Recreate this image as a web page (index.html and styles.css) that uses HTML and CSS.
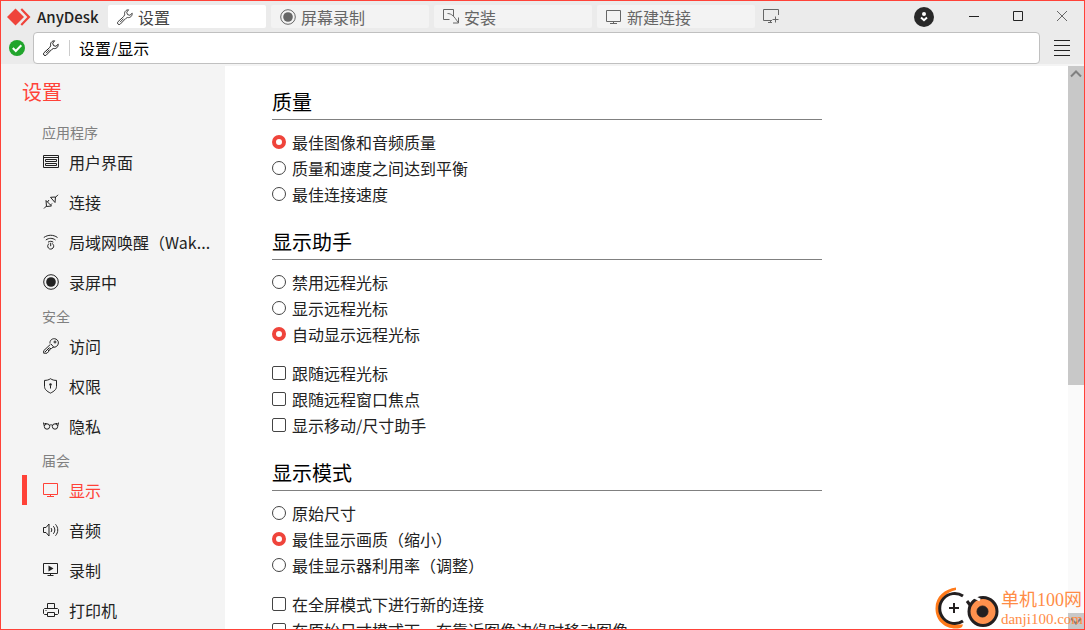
FILE: index.html
```html
<!DOCTYPE html>
<html lang="zh-CN">
<head>
  <meta charset="UTF-8">
  <meta name="viewport" content="width=device-width, initial-scale=1">
  <title>AnyDesk</title>
  <link rel="stylesheet" href="styles.css">
</head>
<body>

  <!-- Shared icons -->
  <svg class="sprite" aria-hidden="true">
    <symbol id="wrench" viewBox="0 0 16 16">
      <path d="M11.6.8C8.8.7 7 3 7.7 5.8L6.600 7.600 1 12.700a1.600 1.600 0 0 0 2.300 2.400L8.600 9.600l1.700-1.100C13 9.200 15.400 7.200 15.200 4.200L12.900 6.300 10.500 5.600 9.700 3.200z"/>
      <path d="M3 13.200l3.500-3.500"/>
    </symbol>
    <symbol id="monitor" viewBox="0 0 16 16">
      <path d="M.5 1.500h14v11H.5zM7.500 12.500v2M4 14.500h7"/>
    </symbol>
    <symbol id="record" viewBox="0 0 16 16">
      <circle cx="8" cy="8" r="7.300"/>
      <circle class="solid" cx="8" cy="8" r="4.800"/>
    </symbol>
  </svg>

  <div class="app">
    <header class="titlebar">
      <div class="brand">
        <svg class="logo" viewBox="0 0 24 18" aria-hidden="true">
          <path d="M8.500.5l8.500 8.500-8.500 8.500L0 9z"/>
          <path d="M13.500 1.700L15 .3 23.500 9 15 17.700l-1.500-1.400L20.300 9z"/>
        </svg>
        <span>AnyDesk</span>
      </div>
      <nav class="tabs">
        <button class="tab active" type="button"><svg class="icon"><use href="#wrench"/></svg>设置</button>
        <button class="tab" type="button"><svg class="icon"><use href="#record"/></svg>屏幕录制</button>
        <button class="tab" type="button">
          <svg class="icon" viewBox="0 0 16 16"><path d="M10.500 4V.5H.5v10h6M10.500 4v3M4.500 4.500c4 0 7 3 10.500 9M15.500 8.500v5.500H10"/></svg>安装
        </button>
        <button class="tab" type="button"><svg class="icon"><use href="#monitor"/></svg>新建连接</button>
      </nav>
      <button class="new-tab" type="button" aria-label="新标签">
        <svg class="icon" viewBox="0 0 16 16"><path d="M15.500 6V.5H.5v11H9M7.500 11.500v2M5 13.500h4M12.500 7.500v6M9.500 10.500h6"/></svg>
      </button>
      <div class="window-controls">
        <button class="update" type="button" aria-label="更新">
          <svg viewBox="0 0 20 20"><circle class="disc" cx="10" cy="10" r="10"/><circle class="dot" cx="10" cy="7" r="2"/><path d="M7 10.500l3 2.700 3-2.700"/></svg>
        </button>
        <button class="control" type="button" aria-label="最小化"><svg class="icon" viewBox="0 0 16 16"><path d="M3 7.500h10"/></svg></button>
        <button class="control" type="button" aria-label="最大化"><svg class="icon" viewBox="0 0 16 16"><path d="M3.500 2.500h9v9h-9z"/></svg></button>
        <button class="control close" type="button" aria-label="关闭"><svg class="icon" viewBox="0 0 16 16"><path d="M3 2l10 10M13 2L3 12"/></svg></button>
      </div>
    </header>

    <div class="addressbar">
      <svg class="status" viewBox="0 0 16 16" aria-hidden="true"><circle cx="8" cy="8" r="8"/><path d="M3.800 8l3 3 5.500-5.700"/></svg>
      <label class="address">
        <svg class="icon" aria-hidden="true"><use href="#wrench"/></svg>
        <input type="text" value="设置/显示" aria-label="地址">
      </label>
      <button class="menu" type="button" aria-label="菜单">
        <svg class="icon" viewBox="0 0 16 16"><path d="M0 .5h16M0 5.500h16M0 10.500h16M0 15.500h16"/></svg>
      </button>
    </div>

    <div class="content">
      <nav class="sidebar">
        <h1>设置</h1>

        <h2>应用程序</h2>
        <a class="item" href="#ui">
          <svg class="icon" viewBox="0 0 16 16"><path d="M.5 1.500h15v12H.5zM.5 3.500h15M2.500 5.500h11v2h-11zM2.500 9.500h11v2h-11z"/></svg>用户界面</a>
        <a class="item" href="#connection">
          <svg class="icon" viewBox="0 0 16 16"><path d="M1 14.500l2.500-2.500M3 6.500l5.500 5.500-5 .5zM4.500 8l1.500-2M7.500 11l1.500-1.500M15 .8L12.500 3.300M7.500 3.300l5-.3-.5 5.500z"/></svg>连接</a>
        <a class="item" href="#wol">
          <svg class="icon" viewBox="0 0 16 16"><path d="M.8 3.500c4.300-3 9.400-3 13.700 0M2.800 6c3.200-2.200 6.600-2.200 9.700 0M5 8.200c1.800-1.200 3.600-1.200 5.300 0M6.200 9.500a3 3 0 1 0 3 0M7.700 8.800v3.400"/></svg>局域网唤醒（Wak...</a>
        <a class="item" href="#recording"><svg class="icon"><use href="#record"/></svg>录屏中</a>

        <h2>安全</h2>
        <a class="item" href="#access">
          <svg class="icon" viewBox="0 0 16 16"><path d="M7 5.500C6.500 2.500 9 .5 11.500.7c2.200.2 4 2 3.900 4.200-.2 2.800-2.500 4.800-5.400 4.300L8.500 10.500H7v1.600H5.500v1.600l-1.500 1.500H.7v-2.500L7.300 6.500M8 6l2.500 2.800M2 14l4.500-4.500"/><circle cx="12" cy="4" r="1"/></svg>访问</a>
        <a class="item" href="#permissions">
          <svg class="icon" viewBox="0 0 16 16"><path d="M7.500.7C5.800 2 3.500 2.400 1.500 2.400v6c0 3 2.500 5 6 6.700 3.500-1.700 6-3.700 6-6.700v-6c-2 0-4.300-.4-6-1.700zM7.500 7.500v3"/><circle class="solid" cx="7.500" cy="6.500" r="1.200"/></svg>权限</a>
        <a class="item" href="#privacy">
          <svg class="icon" viewBox="0 0 16 16"><circle cx="4" cy="8.500" r="2.700"/><circle cx="12" cy="8.500" r="2.700"/><path d="M6.500 7.300c1-.6 2-.6 3 0M1.300 8L.4 4.500M14.700 8l.9-3.500M1.500 5.500h2M12.500 5.500h2"/></svg>隐私</a>

        <h2>届会</h2>
        <a class="item current" href="#display"><svg class="icon"><use href="#monitor"/></svg>显示</a>
        <a class="item" href="#audio">
          <svg class="icon" viewBox="0 0 16 16"><path d="M.5 5.500h2.500l3-3.500v12l-3-3.500H.5zM8 6c1 1.200 1 2.800 0 4M10.300 4.200c2 2.300 2 5.300 0 7.600M12.500 2.300c3 3.400 3 8 0 11.400"/></svg>音频</a>
        <a class="item" href="#record-session">
          <svg class="icon" viewBox="0 0 16 16"><path d="M.5 1.500h14v10H.5zM7.500 11.500v2M4.500 13.500h6"/><path class="solid" d="M5.500 3.500l5 3-5 3z"/></svg>录制</a>
        <a class="item" href="#printer">
          <svg class="icon" viewBox="0 0 16 16"><path d="M4.500 6.500v-5h7v5M4.500 12.500h-3l-1-1v-4l1-1h13l1 1v4l-1 1h-3M4.500 10.500h7v4h-7zM2.500 8.500h1"/></svg>打印机</a>
      </nav>

      <main class="settings">
        <section>
          <h2>质量</h2>
          <div class="options">
            <label><input type="radio" name="quality" checked>最佳图像和音频质量</label>
            <label><input type="radio" name="quality">质量和速度之间达到平衡</label>
            <label><input type="radio" name="quality">最佳连接速度</label>
          </div>
        </section>

        <section>
          <h2>显示助手</h2>
          <div class="options">
            <label><input type="radio" name="cursor">禁用远程光标</label>
            <label><input type="radio" name="cursor">显示远程光标</label>
            <label><input type="radio" name="cursor" checked>自动显示远程光标</label>
          </div>
          <div class="options">
            <label><input type="checkbox">跟随远程光标</label>
            <label><input type="checkbox">跟随远程窗口焦点</label>
            <label><input type="checkbox">显示移动/尺寸助手</label>
          </div>
        </section>

        <section>
          <h2>显示模式</h2>
          <div class="options">
            <label><input type="radio" name="mode">原始尺寸</label>
            <label><input type="radio" name="mode" checked>最佳显示画质（缩小）</label>
            <label><input type="radio" name="mode">最佳显示器利用率（调整）</label>
          </div>
          <div class="options">
            <label><input type="checkbox">在全屏模式下进行新的连接</label>
            <label><input type="checkbox">在原始尺寸模式下，在靠近图像边缘时移动图像</label>
          </div>
        </section>
      </main>

      <div class="scrollbar">
        <button type="button" aria-label="向上滚动"><svg class="icon" viewBox="0 0 16 16"><path d="M3 10.500l5-5 5 5"/></svg></button>
        <div class="track"><div class="thumb"></div></div>
        <button type="button" aria-label="向下滚动"><svg class="icon" viewBox="0 0 16 16"><path d="M3 5.500l5 5 5-5"/></svg></button>
      </div>
    </div>

    <!-- Site badge over the corner -->
    <div class="badge">
      <svg viewBox="0 0 64 42" aria-hidden="true">
        <path class="swoosh" d="M21 .5C10 2 .5 9 .5 21.500.5 33 9 41.500 21 41.500c2.500 0 4.500-.5 6-1.500l1-2.500C13 38.500 4 31 4.500 21 5 12 11 5 21 3z"/>
        <path class="ring" d="M28 9A15 15 0 1 0 28 34"/>
        <path class="ring" d="M32 14l3 4"/>
        <circle class="reel" cx="48" cy="24.500" r="14"/>
        <path class="gap" d="M39 10l6 3"/>
        <circle class="hub" cx="47.500" cy="24.500" r="5.500"/>
        <path class="plus" d="M19 16v10M14 21h10"/>
      </svg>
      <div class="badge-text">
        <span class="badge-name">单机100网</span>
        <span class="badge-url">danji100.com</span>
      </div>
    </div>
  </div>

</body>
</html>
```
FILE: styles.css
```css
* {
  box-sizing: border-box;
}

body {
  margin: 0;
  font-family: "Noto Sans CJK SC", sans-serif;
  font-size: 16px;
  line-height: 24px;
  color: #222;
}

button {
  border: none;
  padding: 0;
  background: none;
  font: inherit;
  color: inherit;
}

.sprite {
  position: absolute;
  width: 0;
  height: 0;
}

.icon {
  flex: none;
  width: 16px;
  height: 16px;
  fill: none;
  stroke: currentColor;
  stroke-width: 1;
}

.solid {
  fill: currentColor;
  stroke: none;
}

.app {
  position: relative;
  display: flex;
  flex-direction: column;
  height: 100vh;
  border: 1px solid #ff4238;
  background: #ebebeb;
  overflow: hidden;
}

/* Title bar */
.titlebar {
  display: flex;
  align-items: center;
  height: 31px;
  padding-left: 6px;
}

.brand {
  display: flex;
  align-items: center;
  gap: 6px;
  width: 101px;
  font-size: 15px;
  font-weight: 500;
}

.logo {
  width: 24px;
  height: 18px;
  fill: #ef443b;
}

.tabs {
  display: flex;
  gap: 5px;
}

.tab {
  display: flex;
  align-items: center;
  gap: 5px;
  width: 158px;
  height: 23px;
  padding: 0 9px;
  border-radius: 2px;
  background: #f3f3f3;
  line-height: 22px;
  color: #666;
  white-space: nowrap;
}

.tab.active {
  background: #fff;
  color: #444;
}

.new-tab {
  display: flex;
  padding: 0 8px;
  color: #666;
}

.window-controls {
  display: flex;
  align-items: center;
  margin-left: auto;
}

.update {
  display: flex;
  margin-right: 18px;
}

.update svg {
  width: 20px;
  height: 20px;
  fill: none;
  stroke: #fff;
  stroke-width: 2;
}

.update .disc {
  fill: #282828;
  stroke: none;
}

.update .dot {
  fill: #fff;
  stroke: none;
}

.control,
.menu {
  display: flex;
  align-items: center;
  justify-content: center;
  width: 44px;
}

.close {
  color: #666;
}

/* Address bar */
.addressbar {
  display: flex;
  align-items: center;
  height: 32px;
  padding-left: 8px;
}

.status {
  width: 16px;
  height: 16px;
  margin-right: 8px;
  fill: #21a52c;
}

.status path {
  fill: none;
  stroke: #fff;
  stroke-width: 2;
}

.address {
  display: flex;
  flex: 1;
  align-items: center;
  height: 32px;
  padding-left: 9px;
  border: 1px solid #c0c0c0;
  border-radius: 4px;
  background: #fff;
}

.address input {
  flex: 1;
  min-width: 0;
  height: 16px;
  margin-left: 10px;
  padding: 0 9px;
  border: none;
  border-left: 1px solid #ccc;
  outline: none;
  background: none;
  font: inherit;
  color: #000;
}

/* Content */
.content {
  display: flex;
  flex: 1;
  min-height: 0;
  border-top: 2px solid #f4f4f4;
  background: #fff;
}

.sidebar {
  flex: none;
  width: 224px;
  background: #f4f4f4;
  overflow: hidden;
}

.sidebar h1 {
  margin: 0;
  padding: 12px 21px;
  font-size: 20px;
  font-weight: 400;
  line-height: 28px;
  color: #ff4238;
}

.sidebar h2 {
  margin: 0;
  padding: 5px 0 1px 41px;
  font-size: 14px;
  font-weight: 400;
  line-height: 18px;
  color: #808080;
}

.item {
  display: flex;
  align-items: center;
  gap: 10px;
  height: 40px;
  padding-left: 21px;
  color: #222;
  text-decoration: none;
  white-space: nowrap;
}

.item::before {
  content: "";
  width: 5px;
  height: 30px;
  margin-right: 6px;
}

.item.current {
  color: #ff4238;
}

.item.current::before {
  background: #ff4238;
}

.settings {
  flex: 1;
  padding: 18px 47px 0;
  overflow: hidden;
}

.settings section {
  max-width: 550px;
  margin-bottom: 17px;
}

.settings h2 {
  margin: 0 0 9px;
  border-bottom: 1px solid #808080;
  font-size: 20px;
  font-weight: 400;
  line-height: 35px;
  color: #000;
}

.options + .options {
  margin-top: 13px;
}

.options label {
  display: flex;
  align-items: center;
  gap: 6px;
  height: 26px;
  white-space: nowrap;
}

.options input {
  appearance: none;
  width: 14px;
  height: 14px;
  margin: 0;
  border: 1px solid #444;
  border-radius: 2px;
  background: #fff;
}

.options input[type="radio"] {
  border-radius: 50%;
}

.options input[type="radio"]:checked {
  border: 4px solid #ef443b;
}

.scrollbar {
  display: flex;
  flex: none;
  flex-direction: column;
  width: 16px;
  background: #fafafa;
}

.scrollbar button {
  display: flex;
  height: 16px;
  background: #c8c8c8;
  color: #808080;
}

.scrollbar .icon {
  stroke-width: 2;
}

.track {
  flex: 1;
}

.thumb {
  height: 57%;
  background: #c8c8c8;
}

/* Site badge */
.badge {
  position: absolute;
  right: 1px;
  bottom: 0;
  display: flex;
  align-items: center;
  gap: 2px;
  color: #ff8c46;
}

.badge svg {
  width: 64px;
  height: 42px;
  fill: none;
  stroke: #231f20;
}

.badge .swoosh {
  fill: #ff7a1a;
  stroke: none;
}

.badge .ring {
  stroke-width: 3;
}

.badge .reel {
  fill: #ff914d;
  stroke-width: 3;
}

.badge .gap {
  stroke: #fff;
  stroke-width: 3;
}

.badge .hub {
  fill: #231f20;
}

.badge .plus {
  stroke-width: 2;
}

.badge-text {
  display: flex;
  flex-direction: column;
  padding-top: 2px;
  font-family: "Liberation Serif", "Noto Sans CJK SC", serif;
}

.badge-name {
  font-size: 18px;
  line-height: 20px;
}

.badge-url {
  font-size: 15px;
  line-height: 18px;
}
```
